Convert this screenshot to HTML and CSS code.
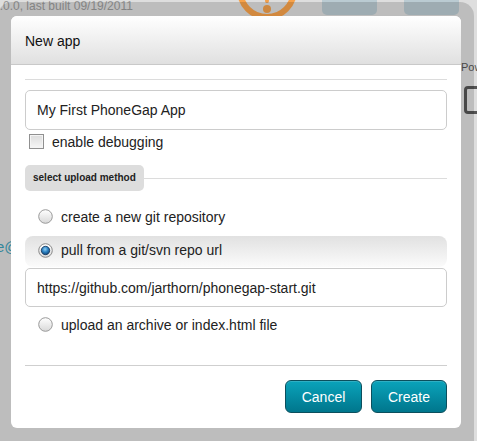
FILE: index.html
```html
<!DOCTYPE html>
<html>
<head>
<meta charset="utf-8">
<link rel="stylesheet" href="styles.css">
</head>
<body>
<div class="page">
  <div class="bg-version">1.0.0, last built 09/19/2011</div>
  <div class="bg-logo"><div class="bg-logo-dot"></div><div class="bg-logo-mark"></div></div>
  <div class="bg-tab bg-tab-1"></div>
  <div class="bg-tab bg-tab-2"></div>
  <div class="bg-pow">Pow</div>
  <div class="bg-device"></div>
  <div class="bg-email">e@</div>
</div>
<div class="frame">
  <div class="dialog">
    <div class="dialog-header">New app</div>
    <div class="dialog-body">
      <div class="rule rule-top"></div>
      <div class="field">My First PhoneGap App</div>
      <label class="check-row"><span class="checkbox"></span><span>enable debugging</span></label>
      <div class="legend-row"><span class="legend">select upload method</span><span class="legend-line"></span></div>
      <div class="radio-row row-first">
        <svg class="radio" width="15" height="15" viewBox="0 0 15 15"><defs><linearGradient id="rg1" x1="0" y1="0" x2="0" y2="1"><stop offset="0" stop-color="#ffffff"/><stop offset="1" stop-color="#d8d8d8"/></linearGradient></defs><circle cx="7.5" cy="7.5" r="6.8" fill="url(#rg1)" stroke="#9a9a9a" stroke-width="1"/></svg>
        <span>create a new git repository</span>
      </div>
      <div class="radio-row row-selected">
        <svg class="radio" width="15" height="15" viewBox="0 0 15 15"><defs><linearGradient id="rg2" x1="0" y1="0" x2="0" y2="1"><stop offset="0" stop-color="#ffffff"/><stop offset="1" stop-color="#d8d8d8"/></linearGradient><radialGradient id="rb" cx="0.45" cy="0.35" r="0.7"><stop offset="0" stop-color="#8fd0f5"/><stop offset="0.5" stop-color="#2a7fc0"/><stop offset="1" stop-color="#0d3f6e"/></radialGradient></defs><circle cx="7.5" cy="7.5" r="6.8" fill="url(#rg2)" stroke="#8a8a8a" stroke-width="1"/><circle cx="7.5" cy="7.5" r="4.2" fill="url(#rb)" stroke="#12335a" stroke-width="0.8"/></svg>
        <span>pull from a git/svn repo url</span>
      </div>
      <div class="field field-url">https://github.com/jarthorn/phonegap-start.git</div>
      <div class="radio-row row-last">
        <svg class="radio" width="15" height="15" viewBox="0 0 15 15"><defs><linearGradient id="rg3" x1="0" y1="0" x2="0" y2="1"><stop offset="0" stop-color="#ffffff"/><stop offset="1" stop-color="#d8d8d8"/></linearGradient></defs><circle cx="7.5" cy="7.5" r="6.8" fill="url(#rg3)" stroke="#9a9a9a" stroke-width="1"/></svg>
        <span>upload an archive or index.html file</span>
      </div>
      <div class="rule rule-bottom"></div>
      <div class="actions">
        <button class="btn">Cancel</button>
        <button class="btn">Create</button>
      </div>
    </div>
  </div>
</div>
</body>
</html>
```
FILE: styles.css
```css
html, body {
  margin: 0;
  padding: 0;
}
body {
  width: 477px;
  height: 441px;
  overflow: hidden;
  position: relative;
  background: #dedede;
  font-family: "Liberation Sans", Arial, sans-serif;
  color: #222;
}
.page {
  position: absolute;
  left: 0;
  top: 0;
  width: 477px;
  height: 441px;
  overflow: hidden;
}
.bg-version {
  position: absolute;
  left: -7px;
  top: -1px;
  font-size: 12px;
  color: #9a9a9a;
  white-space: nowrap;
}
.bg-logo {
  position: absolute;
  left: 237px;
  top: -40px;
  width: 48px;
  height: 48px;
  border: 6px solid #f7a24a;
  border-radius: 50%;
}
.bg-logo-dot {
  position: absolute;
  left: 20px;
  top: 39px;
  width: 8px;
  height: 8px;
  border-radius: 50%;
  background: #f2a04c;
}
.bg-logo-mark {
  position: absolute;
  left: 22px;
  top: 33px;
  width: 4px;
  height: 4px;
  border-radius: 2px;
  background: #f2a04c;
}
.bg-tab {
  position: absolute;
  top: -10px;
  width: 55px;
  height: 25px;
  border-radius: 5px;
  background: #bacbd2;
}
.bg-tab-1 { left: 322px; }
.bg-tab-2 { left: 404px; }
.bg-pow {
  position: absolute;
  left: 461px;
  top: 61px;
  font-size: 11px;
  color: #555;
  white-space: nowrap;
}
.bg-device {
  position: absolute;
  left: 464px;
  top: 86px;
  width: 14px;
  height: 22px;
  border: 3px solid #555;
  border-radius: 4px;
}
.bg-email {
  position: absolute;
  left: -4px;
  top: 238px;
  font-size: 15px;
  color: #3d9fb8;
}
.frame {
  position: absolute;
  left: -2px;
  top: 2px;
  width: 450px;
  height: 412px;
  padding: 14px 13px 13px;
  border-radius: 14px 14px 0 0;
  background: rgba(0, 0, 0, 0.15);
}
.dialog {
  width: 450px;
  height: 412px;
  background: #fff;
  border-radius: 6px;
  overflow: hidden;
  display: flex;
  flex-direction: column;
}
.dialog-header {
  height: 49px;
  box-sizing: border-box;
  border-bottom: 1px solid #c9c9c9;
  background: linear-gradient(#ffffff, #e0e0e0);
  padding: 1px 14px 0;
  display: flex;
  align-items: center;
  font-size: 14px;
  color: #111;
}
.dialog-body {
  padding: 0 14px;
  display: flex;
  flex-direction: column;
}
.rule {
  height: 1px;
  background: #dcdcdc;
}
.rule-top {
  margin-top: 14px;
}
.field {
  margin-top: 10px;
  height: 40px;
  box-sizing: border-box;
  border: 1px solid #cccccc;
  border-radius: 5px;
  padding: 0 11px;
  display: flex;
  align-items: center;
  font-size: 14px;
  color: #222;
}
.check-row {
  margin-top: 4px;
  display: flex;
  align-items: center;
  gap: 8px;
  padding-left: 4px;
  height: 15px;
  font-size: 14px;
}
.checkbox {
  width: 15px;
  height: 15px;
  box-sizing: border-box;
  border: 1px solid #909090;
  background: linear-gradient(#dcdcdc, #f6f6f6);
  box-shadow: inset 0 0 0 1px #f4f4f4;
}
.legend-row {
  margin-top: 16px;
  display: flex;
  align-items: center;
}
.legend {
  height: 26px;
  line-height: 26px;
  padding: 0 8px;
  background: #dddddd;
  border-radius: 5px;
  font-size: 10px;
  font-weight: bold;
  color: #222;
  white-space: nowrap;
}
.legend-line {
  flex: 1;
  height: 1px;
  background: #dcdcdc;
}
.radio-row {
  height: 31px;
  display: flex;
  align-items: center;
  gap: 8px;
  padding-left: 13px;
  font-size: 14px;
  color: #222;
  border-radius: 8px;
}
.radio {
  flex: none;
  display: block;
}
.row-first {
  margin-top: 10px;
}
.row-selected {
  margin-top: 4px;
  background: linear-gradient(#e1e1e1, #fbfbfb);
  padding-bottom: 3px;
  box-sizing: border-box;
}
.field-url {
  margin-top: 1px;
  height: 39px;
}
.row-last {
  margin-top: 2px;
}
.rule-bottom {
  margin-top: 25px;
  background: #cfcfcf;
}
.actions {
  margin-top: 14px;
  display: flex;
  justify-content: flex-end;
  gap: 9px;
}
.btn {
  height: 33px;
  width: 77px;
  border: 1px solid #0c4f5d;
  border-radius: 6px;
  background: linear-gradient(#0aa3bb, #00768c);
  color: #fff;
  font-family: "Liberation Sans", Arial, sans-serif;
  font-size: 14px;
  padding: 0;
  box-shadow: inset 0 1px 0 rgba(255,255,255,0.15);
}
.btn + .btn {
  width: 76px;
}
```
